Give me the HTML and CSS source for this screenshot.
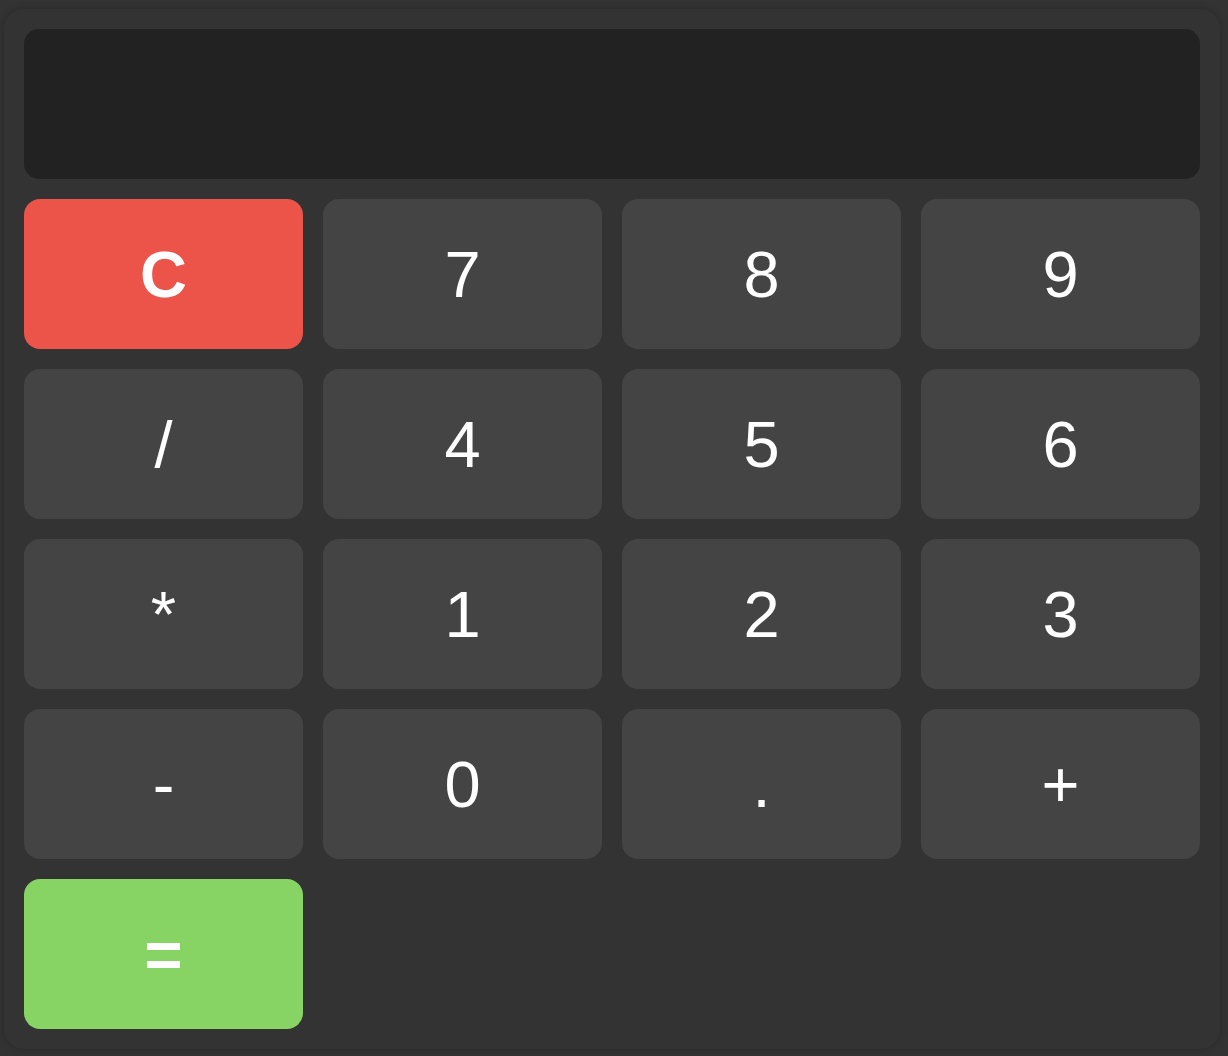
FILE: index.html
```html
<!DOCTYPE html>
<html>
<head>
<meta charset="utf-8">
<title>Calculator</title>
<link rel="stylesheet" href="styles.css">
</head>
<body>
<div class="calculator">
  <div class="display"></div>
  <button class="key key-clear">C</button>
  <button class="key">7</button>
  <button class="key">8</button>
  <button class="key">9</button>
  <button class="key">/</button>
  <button class="key">4</button>
  <button class="key">5</button>
  <button class="key">6</button>
  <button class="key">*</button>
  <button class="key">1</button>
  <button class="key">2</button>
  <button class="key">3</button>
  <button class="key">-</button>
  <button class="key">0</button>
  <button class="key">.</button>
  <button class="key">+</button>
  <button class="key key-equals">=</button>
</div>
</body>
</html>
```
FILE: styles.css
```css
html, body {
  margin: 0;
  background: #333333;
}
body {
  padding: 9px 8px 7px 4px;
  font-family: "Liberation Sans", Arial, sans-serif;
}
.calculator {
  box-sizing: border-box;
  width: 1216px;
  height: 1040px;
  padding: 20px;
  background: #333333;
  border-radius: 20px;
  box-shadow: 0 0 8px rgba(0, 0, 0, 0.2);
  display: grid;
  grid-template-columns: repeat(4, 1fr);
  grid-auto-rows: 150px;
  gap: 20px;
}
.display {
  grid-column: 1 / -1;
  background: #222222;
  border-radius: 15px;
}
.key {
  border: none;
  margin: 0;
  padding: 0;
  background: #444444;
  color: #ffffff;
  border-radius: 16px;
  font-family: "Liberation Sans", Arial, sans-serif;
  font-size: 65px;
  line-height: 1;
}
.key-clear {
  background: #ec544a;
  font-weight: bold;
}
.key-equals {
  background: #87d364;
  font-weight: bold;
}
```
